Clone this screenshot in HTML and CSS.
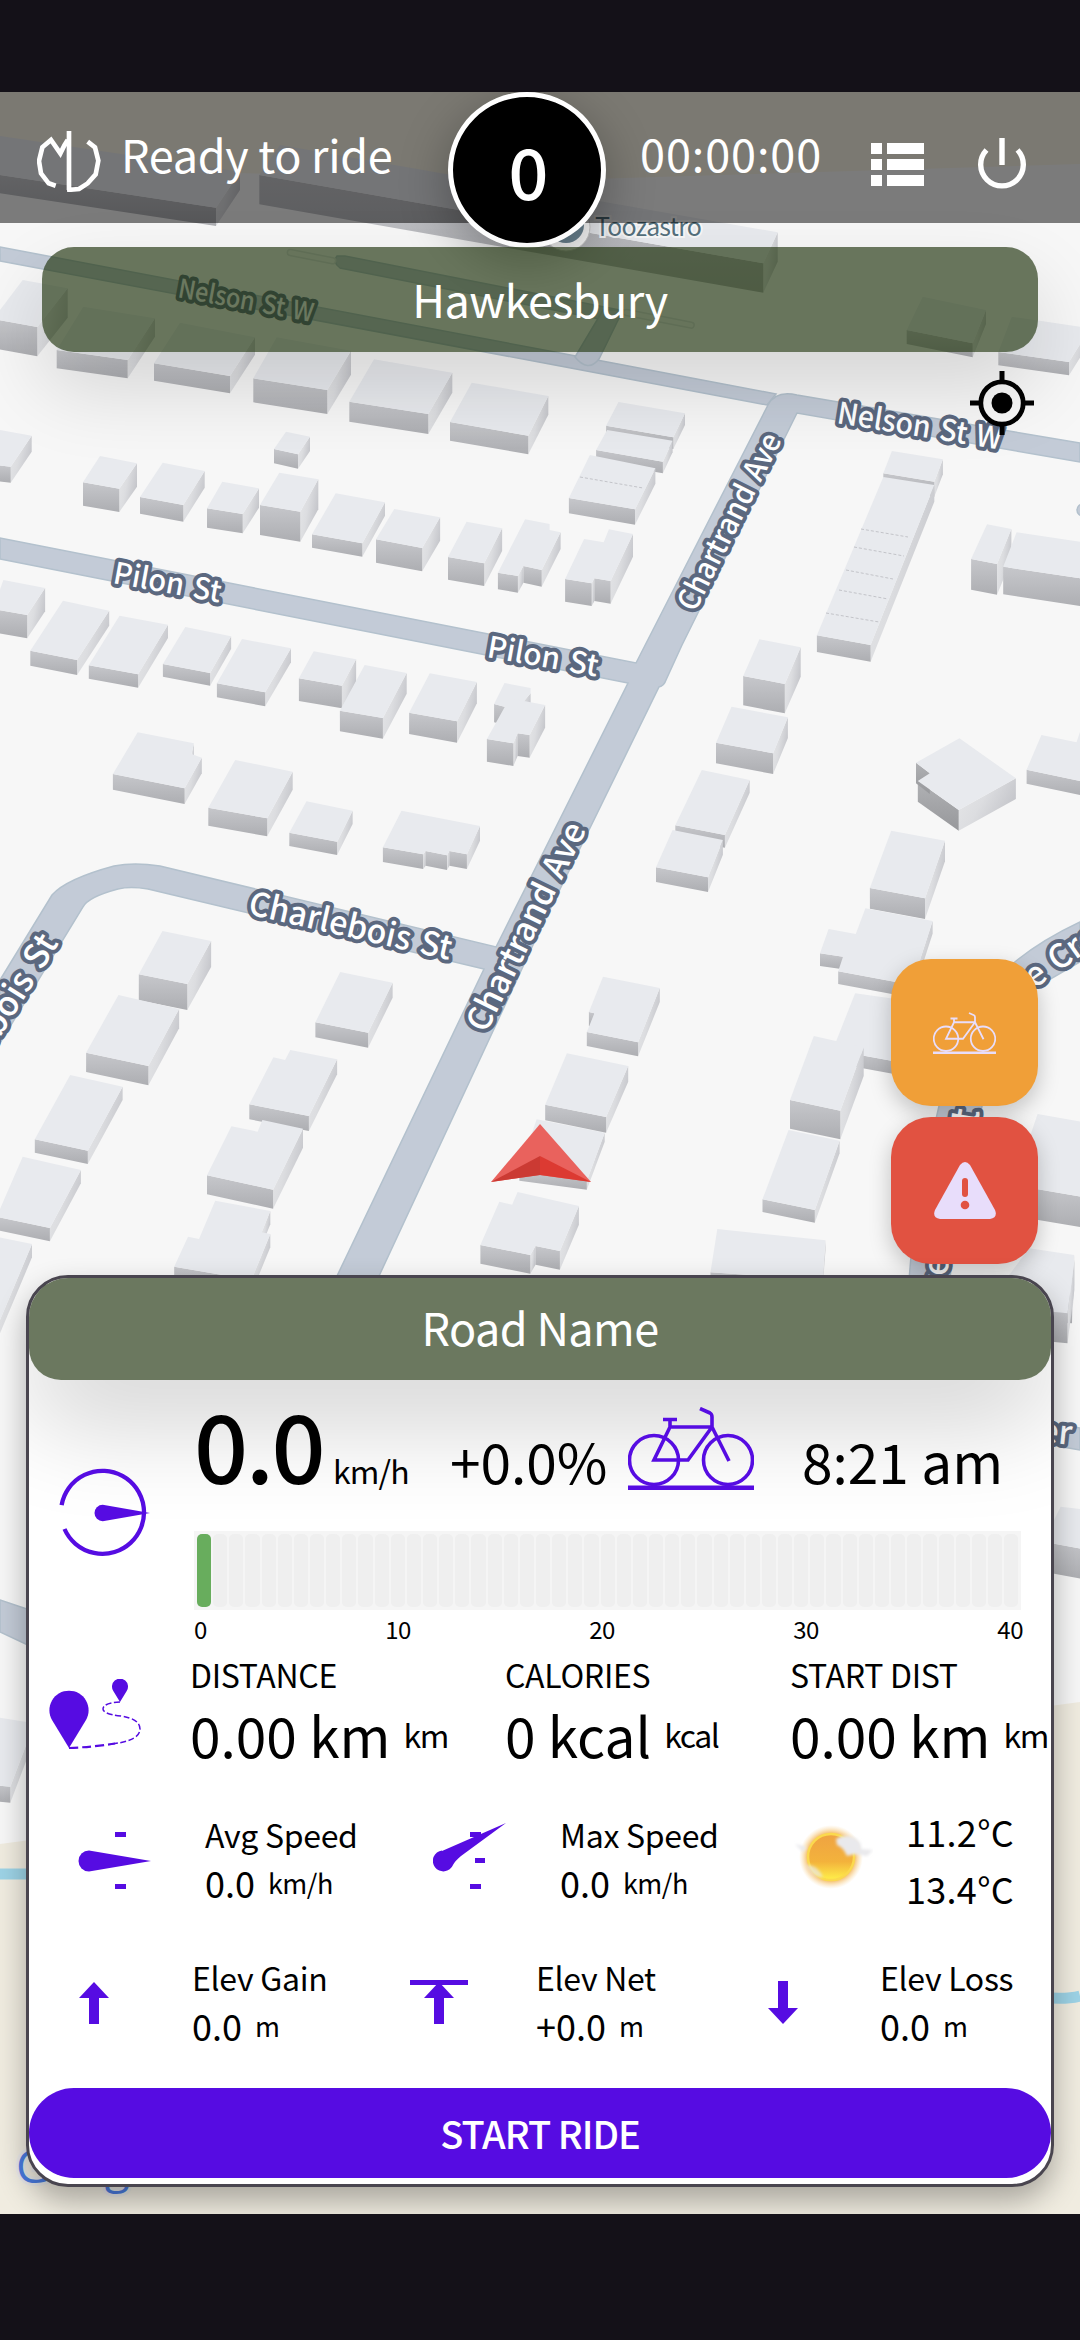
FILE: index.html
```html
<!DOCTYPE html>
<html lang="en">
<head>
<meta charset="utf-8">
<title>Ride dashboard</title>
<link rel="stylesheet" href="styles.css">
</head>
<body>
<div class="device">
  <div class="system-bar"></div>
  <main class="screen">
    <svg class="map" viewBox="0 92 1080 2122" width="1080" height="2122">
      <defs>
        <linearGradient id="front" x1="0" y1="0" x2="0" y2="1"><stop offset="0" stop-color="#c6c7cb"/><stop offset="1" stop-color="#adaeb2"/></linearGradient>
        <linearGradient id="side" x1="0" y1="0" x2="1" y2=".5"><stop offset="0" stop-color="#e6e7e9"/><stop offset=".5" stop-color="#dcdde0"/><stop offset="1" stop-color="#c3c4c9"/></linearGradient>
        <linearGradient id="dark" x1="0" y1="0" x2="0" y2="1"><stop offset="0" stop-color="#b0b1b4"/><stop offset="1" stop-color="#97989b"/></linearGradient>
      </defs>
      <rect x="0" y="92" width="1080" height="2122" fill="#f7f7f7"/>
      <path d="M0 92H1080V164L560 180L0 168Z" fill="#f6f2e5"/>
      <path d="M0 1844L1080 1702V2214H0Z" fill="#f0ece0"/>
      <path d="M0 1874H40M1040 1997Q1065 2000 1080 1996" fill="none" stroke="#9dd3e6" stroke-width="11"/>
      <g class="roads">
        <path d="M0 247L560 353L776 394L767 405L560 366L0 261Z"/>
        <path d="M337 256L345 256L620 310L614 322L340 268Q332 262 337 256Z"/>
        <path d="M603 310H623L599 359Q588 373 575 357Z"/>
        <path d="M768 405Q776 390 797 395L1080 443V462L797 413L682 645L666 680Q664 686 659 687L540 930L379 1276H337L484 969L148 889Q130 886 118 889Q88 897 83 907L0 1043V980L52 895Q66 879 114 866Q134 862 160 866L496 947L628 683L0 559V538L636 663Z"/>
        <path d="M1080 922Q1010 955 975 1003Q955 1050 939 1106L915 1210L909 1280H950L955 1220L982 1106Q992 1030 1040 985L1080 962Z"/>
        <path d="M1040 1421L1080 1428V1450L1040 1443Z"/>
        <path d="M0 1600L30 1610V1646L0 1632Z"/>
        <circle cx="1083" cy="510" r="6"/>
      </g>
      <rect class="median" x="288" y="249" width="49" height="6" rx="3" transform="rotate(11 288 249)"/>
      <rect class="median" x="624" y="309" width="72" height="6" rx="3" transform="rotate(11 624 309)"/>
      <g id="buildings"></g>
      <g class="seams">
        <path d="M580 477L643 488M861 529L908 537M854 547L904 556M846 570L893 579M839 590L888 599M826 613L879 622"/>
      </g>
      <g class="streets">
        <text font-size="26" textLength="137" lengthAdjust="spacingAndGlyphs" transform="translate(177 297) rotate(10.5)">Nelson St W</text>
        <text font-size="30" textLength="166" lengthAdjust="spacingAndGlyphs" transform="translate(836 423) rotate(9.2)">Nelson St W</text>
        <text font-size="30" textLength="109" lengthAdjust="spacingAndGlyphs" transform="translate(112 583) rotate(10.3)">Pilon St</text>
        <text font-size="30" textLength="112" lengthAdjust="spacingAndGlyphs" transform="translate(486 657) rotate(10)">Pilon St</text>
        <text font-size="30" textLength="194" lengthAdjust="spacingAndGlyphs" transform="translate(695 613) rotate(-63.3)">Chartrand Ave</text>
        <text font-size="33" textLength="228" lengthAdjust="spacingAndGlyphs" transform="translate(486 1034) rotate(-63.8)">Chartrand Ave</text>
        <text font-size="33" textLength="207" lengthAdjust="spacingAndGlyphs" transform="translate(247 914) rotate(12.8)">Charlebois St</text>
        <text font-size="34" text-anchor="end" transform="translate(59 943) rotate(-58)">Charlebois St</text>
        <text font-size="33" transform="translate(1034 989) rotate(-35)">e Croissant</text>
        <text font-size="38" transform="translate(977 1126) rotate(-80)">t</text>
        <text font-size="34" transform="translate(946 1290) rotate(-85)">re</text>
        <text font-size="33" text-anchor="end" transform="translate(1071 1445) rotate(6)">er</text>
      </g>
      <g>
        <circle cx="566" cy="227" r="24" fill="#fff" stroke="#ccc"/>
        <circle cx="566" cy="225" r="18" fill="#6e8795"/>
      </g>
      <text class="poi" x="595" y="236" textLength="107">Toozastro</text>
      <text class="brand" x="16" y="2183">Google</text>
      <g>
        <path d="M540 1124L491 1182L540 1175Z" fill="#e9625d"/>
        <path d="M540 1124L591 1182L540 1175Z" fill="#e9625d"/>
        <path d="M491 1182L540 1156V1175Z" fill="#cb3a33"/>
        <path d="M591 1182L540 1156V1175Z" fill="#dc3a32"/>
      </g>
    </svg>

    <header class="topbar">
      <svg class="logo" viewBox="110 120 192 186" width="64" height="62"><path d="M206 123V300M202 150L192 166L180 190L152 150L126 172L116 213L122 250L145 280L166 287M262 155L284 172L294 212L286 253L262 280L236 297L200 300"/></svg>
      <span class="status">Ready to ride</span>
      <span class="timer">00:00:00</span>
      <svg class="list" viewBox="0 0 53 43" width="53" height="43"><path d="M0 0H11V11H0zM16 0H53V11H16zM0 16H11V27H0zM16 16H53V27H16zM0 32H11V43H0zM16 32H53V43H16z" fill="#fff"/></svg>
      <svg class="power" viewBox="0 0 48 52" width="48" height="52"><path d="M24 0V27M8.500 12A21.300 21.300 0 1 0 39.500 12" fill="none" stroke="#fff" stroke-width="5.400"/></svg>
      <div class="speed-badge">0</div>
    </header>

    <div class="banner place">Hawkesbury</div>

    <svg class="locate" viewBox="-32 -32 64 64" width="64" height="64"><circle r="21.200" fill="none" stroke="#000" stroke-width="4.800"/><circle r="10.500"/><path d="M0-32V-21M0 21V32M-32 0H-21M21 0H32" stroke="#000" stroke-width="5"/></svg>

    <div class="actions">
      <button class="fab bike-fab" aria-label="Bike"><svg viewBox="0 0 126 83" width="63" height="42"><use href="#bike"/></svg></button>
      <button class="fab alert-fab" aria-label="Report hazard"><svg viewBox="0 0 62 57" width="62" height="57"><path d="M26 3Q31-3 36 3L61 48Q64 56 56 57H6Q-2 56 1 48Z" fill="#e8ddfb"/><path d="M31 19V32" stroke="#e15241" stroke-width="6" stroke-linecap="round"/><circle cx="31" cy="43" r="4.300" fill="#e15241"/></svg></button>
    </div>

    <section class="panel">
      <div class="banner road">Road Name</div>
      <div class="speed-block">
        <svg class="compass" viewBox="0 0 92 92" width="92" height="92"><path d="M3.600 38.200A41.500 41.500 0 1 1 6.500 62" fill="none" stroke="#560ce2" stroke-width="4.300"/><path d="M44.700 37.800A8.200 8.200 0 1 0 44.700 54.200L92 46Z" fill="#560ce2"/></svg>
        <div class="speed-main">
          <div class="speed-line">
            <span class="speed">0.0</span>
            <span class="speed-unit">km/h</span>
            <span class="grade">+0.0%</span>
            <svg class="bike-icon" viewBox="0 0 126 83" width="126" height="83">
              <g id="bike" fill="none" stroke="currentColor" stroke-width="3.600">
                <circle cx="26" cy="53" r="24.500"/><circle cx="100" cy="53" r="24.500"/>
                <path d="M72 1.500L82 6Q84 7 84 10V20L60 53H26L42 20H84L101 54M42 20V12M35 12.500H49"/>
                <path d="M0 81H126" stroke-width="5"/>
              </g>
            </svg>
            <span class="clock">8:21 am</span>
          </div>
          <div class="gauge" id="gauge"></div>
          <div class="scale"><span>0</span><span>10</span><span>20</span><span>30</span><span>40</span></div>
        </div>
      </div>

      <div class="row totals">
        <svg class="route" viewBox="0 0 94 72" width="94" height="72"><path d="M20 69L3 41A19.600 19.600 0 1 1 37 41Z" fill="#560ce2"/><path d="M71 23L64.300 12A8 8 0 1 1 77.700 12Z" fill="#560ce2"/><path d="M71 23Q54 24 54 30Q54 35 72 37Q91 40 91 50Q91 62 62 65" fill="none" stroke="#560ce2" stroke-width="1.500" stroke-dasharray="6 2.500"/><path d="M20 69Q45 68 66 64.500" fill="none" stroke="#560ce2" stroke-width="2.200" stroke-dasharray="9 4"/></svg>
        <div class="stat"><div class="label">DISTANCE</div><div class="big">0.00 km<small>km</small></div></div>
        <div class="stat"><div class="label">CALORIES</div><div class="big">0 kcal<small>kcal</small></div></div>
        <div class="stat"><div class="label">START DIST</div><div class="big">0.00 km<small>km</small></div></div>
      </div>

      <div class="row speeds">
        <svg class="needle" viewBox="0 0 73 60" width="73" height="60"><path d="M11 19.500A10.500 10.500 0 1 0 11 40.500L73 30Z"/><path d="M37 1H48V6H37zM37 53H48V58H37z"/></svg>
        <div class="stat"><div class="label">Avg Speed</div><div class="mid">0.0<small>km/h</small></div></div>
        <svg class="needle" viewBox="0 -8 73 68" width="73" height="68"><path d="M9 19.500A10.500 10.500 0 1 0 20 34Q22 30 28 25L73-8L9 20Z"/><path d="M37 1H48V6H37zM42 27H52V32H42zM37 53H48V58H37z"/></svg>
        <div class="stat"><div class="label">Max Speed</div><div class="mid">0.0<small>km/h</small></div></div>
        <svg class="sun" viewBox="-42 -34 84 68" width="84" height="68">
          <defs>
            <radialGradient id="halo"><stop offset=".7" stop-color="#f3b04a"/><stop offset="1" stop-color="#f9d9a0" stop-opacity="0"/></radialGradient>
            <linearGradient id="disc" x1="0" y1="0" x2="0" y2="1"><stop offset="0" stop-color="#efa342"/><stop offset=".6" stop-color="#f3b23c"/><stop offset="1" stop-color="#fff04a"/></linearGradient>
            <filter id="soft"><feGaussianBlur stdDeviation="1.500"/></filter>
          </defs>
          <circle r="32" fill="url(#halo)"/><circle r="23" fill="url(#disc)" stroke="#fbd94e" stroke-width="2.500"/>
          <g fill="#e9e9ec" filter="url(#soft)"><path d="M5-18Q14-24 24-19Q31-15 30-8L42-7L36-1L24-3L16-1Q12-10 6-12Z"/><path d="M-36-13L-24-10L-28-5Z"/><path d="M-25 8Q-14 7-8 20Q-18 22-25 8Z" opacity=".7"/></g>
        </svg>
        <div class="temps"><div>11.2°C</div><div>13.4°C</div></div>
      </div>

      <div class="row elevation">
        <svg class="arrow" viewBox="0 0 30 46" width="30" height="46"><path d="M15 2L30 18H20V44H10V18H0Z"/></svg>
        <div class="stat"><div class="label">Elev Gain</div><div class="mid">0.0<small>m</small></div></div>
        <svg class="arrow net" viewBox="0 0 58 46" width="58" height="46"><path d="M29 2L44 18H34V44H24V18H14ZM0 0H58V5H0Z"/></svg>
        <div class="stat"><div class="label">Elev Net</div><div class="mid">+0.0<small>m</small></div></div>
        <svg class="arrow" viewBox="0 0 30 46" width="30" height="46"><path d="M15 44L30 28H20V1H10V28H0Z"/></svg>
        <div class="stat"><div class="label">Elev Loss</div><div class="mid">0.0<small>m</small></div></div>
      </div>

      <button class="start">START RIDE</button>
    </section>
  </main>
  <div class="system-bar nav"></div>
</div>
<script src="map.js"></script>
</body>
</html>
```
FILE: styles.css
```css
* { box-sizing: border-box; }
body { margin: 0; background: #141118; color: #000; font-family: "Noto Sans CJK JP", "Noto Sans", sans-serif; }
button { border: 0; padding: 0; font: inherit; }
.device { width: 1080px; height: 2340px; display: flex; flex-direction: column; overflow: hidden; }
.system-bar { height: 92px; flex: none; background: #141118; }
.nav { height: 126px; }
.screen { position: relative; flex: 1; min-height: 0; display: flex; flex-direction: column; overflow: hidden; }

.map { position: absolute; inset: 0; display: block; }
.roads path, .roads circle { fill: #c3cbd7; stroke: #b3c1cd; stroke-width: 1.5px; }
.median { fill: #f3f3f3; stroke: #dcdfe2; stroke-width: 1.5px; }
.roof { fill: #e8eaee; }
.seams path { fill: none; stroke: #c3c4c9; stroke-width: 1px; stroke-dasharray: 3 2; }
.streets text { font-weight: 500; fill: #fff; stroke: #5b687f; stroke-width: 8px; stroke-linejoin: round; paint-order: stroke; word-spacing: 3px; }
.poi { font-size: 25px; fill: #55707c; stroke: #f7f7f7; stroke-width: 4px; paint-order: stroke; }
.brand { font-family: "Open Sans", sans-serif; font-size: 46px; fill: #4a7be0; stroke: #e8e8e8; stroke-width: 6px; paint-order: stroke; }

.topbar { position: relative; height: 131px; flex: none; display: flex; align-items: flex-start; background: rgba(0, 0, 0, .5); color: #fff; font-size: 45px; line-height: 60px; padding-left: 37px; }
.logo { margin-top: 38px; fill: none; stroke: #fff; stroke-width: 14px; }
.status { width: 516px; margin: 32px 0 0 20px; letter-spacing: -.3px; }
.timer { width: 230px; margin-top: 31px; padding-left: 3px; letter-spacing: .9px; }
.list { margin: 51px 0 0 4px; }
.power { margin: 46px 0 0 54px; }
.speed-badge { position: absolute; left: 448px; top: 0; width: 158px; height: 156px; border: 5px solid #fff; border-radius: 50%; background: #000; text-align: center; font-size: 70px; font-weight: 500; line-height: 145px; padding-left: 3px; box-shadow: 0 14px 50px rgba(0, 0, 0, .3); }

.banner { background: rgba(27, 47, 9, .65); color: #fff; text-align: center; font-size: 45px; letter-spacing: -.6px; box-shadow: 0 36px 80px rgba(0, 0, 0, .14); }
.place { position: relative; height: 105px; flex: none; margin: 24px 42px 0; border-radius: 32px; line-height: 104px; }
.locate { position: relative; flex: none; margin: 19px 0 0 970px; }

.actions { position: absolute; left: 891px; top: 867px; display: flex; flex-direction: column; gap: 11px; }
.fab { width: 147px; height: 147px; border-radius: 40px; display: flex; align-items: center; justify-content: center; color: #e8ddfb; box-shadow: 0 8px 22px rgba(0, 0, 0, .22); }
.bike-fab { background: #f09f38; }
.alert-fab { background: #e15241; }

.panel { position: relative; height: 912px; flex: none; margin: auto 26px 27px; display: flex; flex-direction: column; background: #fff; border: 3px solid #49454f; border-radius: 42px; overflow: hidden; box-shadow: 0 14px 30px rgba(0, 0, 0, .3); }
.road { height: 102px; flex: none; line-height: 98px; border-radius: 0 0 32px 32px; box-shadow: 0 42px 100px rgba(0, 0, 0, .18); }
.speed-block { display: grid; grid-template-columns: 162px 1fr; height: 274px; flex: none; }
.compass { margin: 87px 0 0 29px; }
.speed-line { height: 151px; padding-top: 15px; display: grid; grid-template-columns: 139px 117px 178px 174px 1fr; align-items: baseline; padding-left: 3px; }
.speed { font-size: 95px; line-height: 95px; font-weight: 500; letter-spacing: -2.5px; }
.speed-unit { font-size: 32px; letter-spacing: -.9px; }
.grade, .clock { font-size: 55px; line-height: 60px; white-space: nowrap; }
.bike-icon { align-self: start; margin-top: 12px; color: #560ce2; }
.gauge { width: 827px; height: 79px; margin-left: 3px; padding: 3px; display: flex; gap: 2px; background: #f5f5f5; }
.gauge i { flex: 1; border-radius: 5px; background: #efefef; }
.gauge i.on { background: #68ad5d; }
.scale { width: 829px; margin-left: 3px; display: flex; justify-content: space-between; font-size: 24px; line-height: 38px; letter-spacing: -.5px; }

.row { display: grid; flex: none; align-items: start; }
.label { font-size: 32px; line-height: 40px; white-space: nowrap; letter-spacing: -.3px; }
.big { margin-top: 10px; font-size: 55px; line-height: 60px; white-space: nowrap; }
.big small { margin-left: 13px; font-size: 32px; line-height: 0; vertical-align: 10px; letter-spacing: -1.5px; }
.mid { margin-top: 6px; font-size: 36px; line-height: 44px; white-space: nowrap; }
.mid small { margin-left: 13px; font-size: 27px; line-height: 0; vertical-align: 4px; letter-spacing: -.5px; }
.totals { height: 136px; grid-template-columns: 161px 315px 285px 1fr; }
.totals .stat:last-child { min-width: 0; }
.route { margin: 25px 0 0 20px; }
.speeds { height: 140px; padding-top: 24px; grid-template-columns: 176px 227px 128px 229px 117px 1fr; }
.needle, .arrow { fill: #560ce2; }
.speeds .needle { margin: 17px 0 0 49px; }
.speeds .stat + .needle { margin: 9px 0 0 1px; }
.sun { margin-top: 9px; }
.temps { margin-top: -11px; font-size: 36px; line-height: 57px; letter-spacing: .3px; }
.elevation { height: 158px; padding-top: 27px; grid-template-columns: 163px 218px 126px 232px 112px 1fr; }
.elevation .arrow { margin: 23px 0 0 50px; }
.elevation .stat + .arrow { margin-left: 0; }
.start { height: 90px; flex: none; border-radius: 45px; background: #560ce2; color: #fff; font-size: 38px; font-weight: 500; line-height: 86px; letter-spacing: -1px; }
```
FILE: map.js
```js
// Building footprints per map sector: [roof height, x1, y1, x2, y2, ...], roofs listed clockwise.
const sectors = [
  { x: 0, y: 90, sx: 3, sy: 3, items: [
    [55, -20,135, 720,245, 648,353, -20,252],
    [88, 840,165, 2333,427, 2290,520, 778,255],
    [88, 68,570, 203,595, 112,711, -20,687],
    [55, 250,650, 465,685, 383,810, 170,780],
    [52, 540,698, 765,742, 690,858, 462,820],
    [72, 830,742, 1053,782, 982,900, 760,865],
    [60, 1122,808, 1357,848, 1285,972, 1048,935],
    [56, 1415,878, 1645,918, 1585,1037, 1350,996],
    [43, 858,1025, 930,1040, 894,1093, 822,1077],
    [48, -10,1018, 95,1037, 32,1130, -10,1125],
    [70, 300,1098, 411,1120, 358,1196, 249,1177],
    [50, 488,1118, 614,1143, 550,1245, 420,1221],
    [58, 667,1175, 777,1195, 728,1272, 621,1255],
    [90, 838,1148, 955,1168, 901,1265, 780,1245]] },
  { x: 560, y: 90, sx: 3, sy: 3, items: [
    [42, 1088,620, 1278,660, 1238,760, 1040,720],
    [40, 1355,680, 1590,715, 1527,816, 1315,786]] },
  { x: 0, y: 480, sx: 2.904, sy: 3, items: [
    [40, 975,40, 1118,67, 1052,190, 906,163],
    [70, 1145,87, 1278,112, 1226,204, 1092,178],
    [68, 1355,125, 1458,145, 1406,250, 1301,231],
    [50, 1525,118, 1596,132, 1596,150, 1628,157, 1573,270, 1520,258, 1504,288, 1446,278],
    [70, 10,300, 131,324, 79,405, -20,387],
    [45, 183,362, 317,392, 224,540, 88,512],
    [40, 347,407, 488,434, 401,583, 258,556],
    [38, 538,441, 671,469, 610,579, 473,552],
    [42, 703,477, 845,505, 770,637, 630,610],
    [68, 911,514, 1034,538, 993,617, 868,595],
    [62, 1059,555, 1181,579, 1112,714, 987,692],
    [64, 1248,580, 1385,606, 1327,724, 1188,698],
    [55, 1465,609, 1541,624, 1541,640, 1500,690, 1435,672],
    [68, 1480,655, 1583,675, 1538,765, 1503,760, 1491,790, 1414,777],
    [47, 400,757, 563,790, 556,822, 586,833, 536,925, 328,882],
    [54, 683,840, 850,875, 776,1015, 605,983],
    [40, 890,964, 1024,992, 979,1085, 840,1058],
    [44, 1166,992, 1394,1038, 1356,1123, 1305,1113, 1298,1126, 1236,1113, 1229,1123, 1112,1102]] },
  { x: 540, y: 400, sx: 2.904, sy: 3, items: [
    [35, 228,6, 421,40, 387,112, 192,77],
    [35, 195,90, 385,122, 357,185, 163,150],
    [46, 145,165, 335,205, 276,328, 84,294],
    [68, 200,388, 270,402, 205,543, 158,535, 150,550, 73,537, 128,417, 185,427],
    [45, 1022,153, 1170,178, 1145,245, 997,220],
    [50, 997,231, 1145,255, 960,735, 804,706],
    [92, 1298,373, 1369,387, 1327,492, 1252,477],
    [83, 1384,397, 1600,430, 1600,540, 1345,500],
    [88, 637,718, 757,742, 711,852, 590,828],
    [62, 556,920, 720,952, 677,1060, 511,1028],
    [38, 470,1110, 609,1140, 537,1305, 393,1276],
    [44, 385,1290, 531,1320, 488,1432, 337,1402],
    [62, 1218,1015, 1382,1135, 1216,1230, 1097,1143, 1132,1120, 1092,1088],
    [42, 1456,1005, 1558,1027, 1570,990, 1600,1000, 1600,1150, 1413,1109],
    [62, 1020,1292, 1176,1322, 1118,1495, 958,1464]] },
  { x: 540, y: 860, sx: 2.904, sy: 3, items: [
    [38, 945,145, 1140,183, 1080,375, 866,334, 880,290, 813,280, 838,207, 917,222],
    [38, 915,400, 1120,430, 1060,610, 850,570],
    [86, 795,528, 940,562, 872,752, 726,720],
    [38, 722,810, 870,842, 798,1050, 646,1018],
    [30, 515,1107, 829,1141, 820,1260, 495,1237],
    [42, 183,350, 348,384, 285,547, 136,516, 158,460, 142,456],
    [27, -10,778, 188,818, 136,962, -60,935],
    [47, 78,580, 256,618, 192,771, 15,734],
    [92, 1445,762, 1600,790, 1600,1015, 1375,975],
    [90, 1420,1165, 1551,1185, 1545,1300, 1330,1290]] },
  { x: 0, y: 860, sx: 2.904, sy: 3, items: [
    [78, 472,213, 613,243, 544,372, 403,343],
    [58, 344,405, 520,447, 431,618, 250,578],
    [40, 204,645, 356,680, 255,872, 101,838],
    [40, 66,890, 235,930, 145,1104, -10,1070],
    [40, -10,1130, 93,1152, 0,1380, -60,1370],
    [45, 988,336, 1140,368, 1069,518, 916,487],
    [45, 843,570, 979,598, 897,768, 724,733, 794,592, 828,600],
    [57, 762,780, 880,806, 793,989, 601,946, 672,799, 748,815],
    [40, 625,1022, 785,1053, 760,1117, 785,1122, 730,1260, 506,1220, 546,1130, 578,1137],
    [56, 1503,996, 1681,1038, 1626,1173, 1555,1158, 1540,1185, 1395,1155, 1450,1025, 1487,1034]] },
  { x: 0, y: 1260, sx: 1.452, sy: 3, items: [
    [90, 1515,-20, 1560,0, 1550,160, 1500,150],
    [90, 1540,740, 1580,750, 1580,870, 1515,845],
    [48, -10,1370, 50,1390, 15,1580, -10,1575]] }
];

const poly = (points, attrs) => `<polygon points="${points.map(p => p.map(n => n.toFixed(1)).join()).join(' ')}" ${attrs}/>`;

let out = '';
for (const s of sectors) {
  for (const [h, ...c] of s.items) {
    const roof = [];
    for (let i = 0; i < c.length; i += 2) roof.push([s.x + c[i] / s.sx, s.y + c[i + 1] / s.sy]);
    const drop = h / s.sy;
    const faces = roof.map((a, i) => {
      const b = roof[(i + 1) % roof.length];
      const len = Math.hypot(b[0] - a[0], b[1] - a[1]);
      return { a, b, nx: (b[1] - a[1]) / len, ny: (a[0] - b[0]) / len };
    }).filter(f => f.ny > 0.05).sort((f, g) => g.nx - f.nx);
    for (const { a, b, nx } of faces) {
      const fill = nx > 0.35 ? 'side' : nx < -0.4 ? 'dark' : 'front';
      out += poly([a, b, [b[0], b[1] + drop], [a[0], a[1] + drop]], `fill="url(#${fill})"`);
    }
    out += poly(roof, 'class="roof"');
  }
}
document.getElementById('buildings').innerHTML = out;

document.getElementById('gauge').innerHTML =
  Array.from({ length: 51 }, (_, i) => `<i${i ? '' : ' class="on"'}></i>`).join('');
```
